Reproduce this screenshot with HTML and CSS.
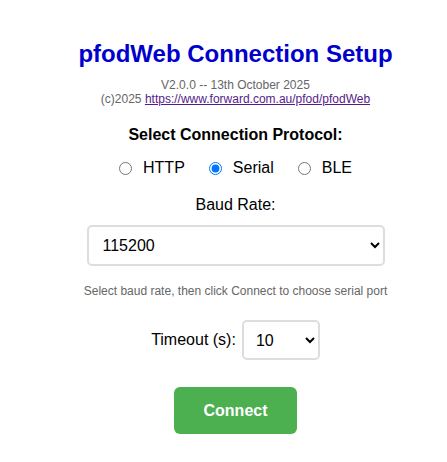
FILE: index.html
```html
<!DOCTYPE html>
<html>
<head>
<meta charset="utf-8">
<title>pfodWeb Connection Setup</title>
<link rel="stylesheet" href="styles.css">
</head>
<body>
<div class="page">
  <h1 class="title">pfodWeb Connection Setup</h1>
  <div class="version">
    <div>V2.0.0 -- 13th October 2025</div>
    <div>(c)2025 <a href="#">https://www.forward.com.au/pfod/pfodWeb</a></div>
  </div>
  <div class="section-title">Select Connection Protocol:</div>
  <div class="radios">
    <label class="radio"><input type="radio" name="p"> HTTP</label>
    <label class="radio"><input type="radio" name="p" checked> Serial</label>
    <label class="radio"><input type="radio" name="p"> BLE</label>
  </div>
  <div class="label">Baud Rate:</div>
  <select class="baud">
    <option>115200</option>
  </select>
  <div class="help">Select baud rate, then click Connect to choose serial port</div>
  <div class="timeout-row">
    <span class="timeout-label">Timeout (s):</span>
    <select class="timeout"><option>10</option></select>
  </div>
  <button class="connect">Connect</button>
</div>
</body>
</html>
```

FILE: styles.css
```css
html, body {
  margin: 0;
  padding: 0;
  background: #fff;
}
body {
  font-family: "Liberation Sans", Arial, sans-serif;
  color: #000;
}
.page {
  padding: 0 0 0 24px;
  display: flex;
  flex-direction: column;
  align-items: center;
}
.title {
  margin: 40px 0 0;
  font-size: 24px;
  font-weight: bold;
  color: #0000cc;
  line-height: 28px;
}
.version {
  margin-top: 10px;
  font-size: 12px;
  line-height: 14px;
  color: #666;
  text-align: center;
}
.version a {
  color: #551a8b;
}
.section-title {
  margin-top: 19px;
  font-size: 16px;
  font-weight: bold;
  line-height: 20px;
}
.radios {
  margin-top: 13px;
  display: flex;
  gap: 24px;
  font-size: 16px;
  line-height: 20px;
}
.radio {
  display: flex;
  align-items: center;
  gap: 11px;
}
.radio input {
  margin: 0;
  width: 13px;
  height: 13px;
}
.label {
  margin-top: 17px;
  font-size: 16px;
  line-height: 20px;
}
.baud {
  margin-top: 10px;
  width: 298px;
  height: 41px;
  padding: 0 10px;
  font-size: 16px;
  font-family: "Liberation Sans", Arial, sans-serif;
  border: 2px solid #ddd;
  border-radius: 5px;
  background: #fff;
  color: #000;
}
.help {
  margin-top: 18px;
  font-size: 12px;
  line-height: 14px;
  color: #666;
}
.timeout-row {
  margin-top: 22px;
  display: flex;
  align-items: center;
  gap: 6px;
}
.timeout-label {
  font-size: 16px;
}
.timeout {
  width: 78px;
  height: 40px;
  padding: 0 8px;
  font-size: 16px;
  font-family: "Liberation Sans", Arial, sans-serif;
  border: 2px solid #ddd;
  border-radius: 5px;
  background: #fff;
  color: #000;
}
.connect {
  margin-top: 27px;
  width: 123px;
  height: 47px;
  background: #4caf50;
  color: #fff;
  border: none;
  border-radius: 6px;
  font-size: 16px;
  font-weight: bold;
  font-family: "Liberation Sans", Arial, sans-serif;
}
```
